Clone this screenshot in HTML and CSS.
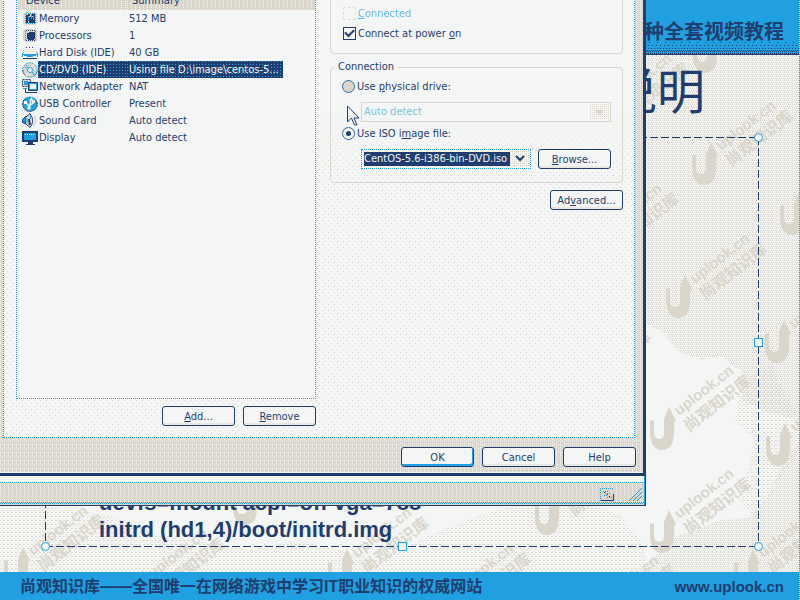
FILE: index.html
```html
<!DOCTYPE html>
<html lang="zh-CN">
<head>
<meta charset="utf-8">
<title>uplook.cn</title>
<link rel="stylesheet" href="styles.css">
</head>
<body>
<div class="slide">
  <svg class="backdrop" aria-hidden="true">
    <defs>
      <pattern id="dither" width="4" height="4" patternUnits="userSpaceOnUse">
        <path class="dot" d="M0 0h1v1h-1zM2 0h1v1h-1zM1 2h1v1h-1zM3 2h1v1h-1zM0 3h1v1h-1z"/>
      </pattern>
      <pattern id="sparse" width="4" height="4" patternUnits="userSpaceOnUse">
        <path class="dot" d="M0 0h1v1h-1zM2 2h1v1h-1zM3 0h1v1h-1z"/>
      </pattern>
      <g id="mark">
        <path d="M0 14L4 13V25Q4 32 9 32Q15 32 14 23V12L19 0L26 14L24 16Q25 35 20 40Q14 45 7 42Q0 38 0 25Z"/>
        <g transform="translate(29 9) rotate(-38)">
          <text class="mark-latin" x="0" y="0">uplook.cn</text>
          <text class="mark-cjk" x="-2" y="19">尚观知识库</text>
        </g>
      </g>
    </defs>
    <path fill="url(#dither)" d="M640 50H800V572H640L672 538L720 520L748 518L765 500L780 470L800 440V420L768 412L742 400V372L720 356L700 360L680 352L660 330L640 324Z"/>
    <path fill="url(#sparse)" d="M742 380L770 365L800 420V450L770 490L755 520L740 500L755 440L735 420ZM0 506H40L110 515L160 535L250 550L300 540L380 560L430 535L480 515L560 495L620 515L640 540L650 572H0Z"/>
    <g class="marks">
      <use href="#mark" x="693" y="30"/><use href="#mark" x="588" y="95"/>
      <use href="#mark" x="692" y="142"/><use href="#mark" x="780" y="192"/>
      <use href="#mark" x="578" y="225"/><use href="#mark" x="666" y="275"/>
      <use href="#mark" x="765" y="320"/><use href="#mark" x="550" y="362"/>
      <use href="#mark" x="650" y="407"/><use href="#mark" x="766" y="423"/>
      <use href="#mark" x="650" y="510"/><use href="#mark" x="535" y="492"/>
      <use href="#mark" x="734" y="549"/><use href="#mark" x="233" y="482"/>
      <use href="#mark" x="328" y="549"/><use href="#mark" x="4" y="547"/>
      <use href="#mark" x="124" y="570"/><use href="#mark" x="430" y="585"/>
      <use href="#mark" x="575" y="597"/>
    </g>
  </svg>
  <header class="banner">种全套视频教程</header>
  <main class="content">
    <h1 class="title">说明</h1>
    <div class="placeholder">
      <p class="code">devfs=mount acpi=off vga=788<br>initrd (hd1,4)/boot/initrd.img</p>
      <i class="handle round at-tr"></i><i class="handle at-r"></i>
      <i class="handle round at-br"></i><i class="handle at-b"></i>
      <i class="handle round at-bl"></i>
    </div>
  </main>
  <footer class="footer"><span>尚观知识库——全国唯一在网络游戏中学习IT职业知识的权威网站</span><a class="site" href="#">www.uplook.cn</a></footer>
</div>

<div class="vm-window">
  <div class="vm-edge"></div>
  <div class="statusbar">
    <svg class="status-icon" width="14" height="13" viewBox="0 0 14 13" shape-rendering="crispEdges"><path fill="#dad6cc" d="M0 0h14v13H0z"/><path fill="none" stroke="#20a0e0" stroke-dasharray="1 1" d="M0 .5h14M.5 0v13M3 3.500h6M5 5.500h5M4 7.500h4M7 9.500h5"/><path fill="#1f3d6f" d="M1 12h13v1H1zM13 6h1v7h-1zM4 4h1v1H4zM7 6h1v1H7zM9 8h1v1H9z"/></svg>
    <svg class="grip" width="14" height="14" viewBox="0 0 14 14" shape-rendering="crispEdges"><path stroke="#20a0e0" fill="none" d="M1 14L14 1M5 14L14 5M9 14L14 9"/></svg>
  </div>
</div>

<form class="dialog">
  <div class="page">
    <div class="devices">
      <div class="list">
        <table>
          <colgroup><col class="c-icon"><col class="c-name"><col class="c-sum"><col></colgroup>
          <thead><tr><th colspan="2">Device</th><th colspan="2" class="summary">Summary</th></tr></thead>
          <tbody>
            <tr><td><svg class="ic" viewBox="0 0 16 16"><rect x="1" y="1" width="14" height="13" rx="3" fill="#dad6cc"/><path fill="none" stroke="#20a0e0" stroke-dasharray="1 1" d="M4 2.500h9M4 12.500h9M3.500 3v9M13.500 3v9"/><path fill="#1f3d6f" d="M4 4h2v8H4zM7 6h5v6H7zM6 3h2v2H6zM10 3h3v2h-3zM12 5h1v7h-1z"/><path stroke="#20a0e0" d="M6.500 5v5M9.500 3v5M11.500 5v4"/></svg></td><td>Memory</td><td>512 MB</td><td></td></tr>
            <tr><td><svg class="ic" viewBox="0 0 16 16"><rect x="1" y="1" width="14" height="13" rx="3" fill="#dad6cc"/><path fill="none" stroke="#1f3d6f" stroke-dasharray="1 1" d="M4 2.500h9M4 12.500h9"/><path fill="none" stroke="#20a0e0" stroke-dasharray="1 1" d="M3.500 3v9M13.500 3v9"/><path fill="#1f3d6f" d="M5 5h2V4h6v7h-1v1H6v-1H5z"/></svg></td><td>Processors</td><td>1</td><td></td></tr>
            <tr><td><svg class="ic" viewBox="0 0 16 16"><path fill="#f4f6f5" d="M3 3h10l3 6v4H0V9z"/><path stroke="#1f3d6f" stroke-dasharray="1 2" d="M4 2.500h9"/><path stroke="#dad6cc" stroke-dasharray="1 1" d="M3 4.500h11M2 6.500h13"/><path fill="#20a0e0" d="M0 8h1v4H0zM15 8h1v4h-1zM1 9h14v1h-1v1h-3v1H5v-1H2v-1H1z"/><path stroke="#20a0e0" stroke-dasharray="1 1" d="M1 7.500h1M14 7.500h1"/><path stroke="#1f3d6f" d="M1 13.500h14"/></svg></td><td>Hard Disk (IDE)</td><td>40 GB</td><td></td></tr>
            <tr class="selected"><td><svg class="ic" viewBox="0 0 16 16"><circle cx="8" cy="8" r="7.300" fill="#dad6cc" stroke="#20a0e0" stroke-dasharray="2 1"/><path stroke="#1f3d6f" stroke-dasharray="1 1" fill="none" d="M3 13a6 6 0 0 1-2-5M12 14a7 7 0 0 0 3-5"/><path stroke="#20a0e0" stroke-dasharray="2 1" d="M4 3l3 4M9 9l3 4M3 5l3 3M10 10l3 2"/><path stroke="#f4f6f5" d="M9 6l3-4M7 10l-3 4"/><circle cx="8" cy="8" r="2.500" fill="#f4f6f5" stroke="#20a0e0"/></svg></td><td>CD/DVD (IDE)</td><td>Using file D:\image\centos-5...</td><td></td></tr>
            <tr><td><svg class="ic" viewBox="0 0 16 16"><path fill="#dad6cc" stroke="#1f3d6f" stroke-dasharray="2 1" d="M.5.5h8v7h-8z"/><path fill="#20a0e0" d="M2 2h4v4H2z"/><path stroke="#1f3d6f" fill="none" d="M3.500 9v4.500h3"/><path stroke="#20a0e0" fill="none" d="M1 9.500h4"/><path fill="#20a0e0" stroke="#1f3d6f" d="M6.500 3.500h9v8h-9z"/><path fill="#f4f6f5" d="M8 5h6v5H8z"/><path stroke="#1f3d6f" d="M6 13.500h9"/></svg></td><td>Network Adapter</td><td>NAT</td><td></td></tr>
            <tr><td><svg class="ic" viewBox="0 0 16 16"><circle cx="8" cy="8" r="7.600" fill="#20a0e0"/><path fill="none" stroke="#1f3d6f" stroke-dasharray="2 1" d="M4 2a7.300 7.300 0 1 0 10 2"/><path stroke="#f4f6f5" stroke-width="1.500" fill="none" d="M7 12l2-8M7 10L4 7M7 10l4-3V5"/><path fill="#f4f6f5" d="M7 4l3-3 1 4zM2 5h3v3H2zM10 4h3v3h-3z"/><circle cx="7" cy="12" r="1.800" fill="#f4f6f5"/></svg></td><td>USB Controller</td><td>Present</td><td></td></tr>
            <tr><td><svg class="ic" viewBox="0 0 16 16"><path fill="#20a0e0" stroke="#1f3d6f" d="M.5 6.500L4 3v8L.5 9.500z"/><path fill="#dad6cc" d="M4 4L8 0v14l-4-3z"/><path fill="none" stroke="#1f3d6f" d="M4 4L8 .5Q11 4 10.500 9 10 12 8 14.500L4 11"/><path stroke="#20a0e0" fill="none" d="M5 5v5M8.500 3v3"/><path stroke="#1f3d6f" stroke-width="2" d="M7 6l1 6"/><path stroke="#dad6cc" stroke-width="2" fill="none" d="M12 3q4 4-1 10"/></svg></td><td>Sound Card</td><td>Auto detect</td><td></td></tr>
            <tr><td><svg class="ic" viewBox="0 0 16 16"><path fill="#1f3d6f" d="M0 1h16v11H0zM6 12h5v2H6zM4 14h9v1H4z"/><path fill="#20a0e0" d="M2 3h12v7H2z"/><path stroke="#f4f6f5" stroke-dasharray="1 1" d="M3 4.500h10"/></svg></td><td>Display</td><td>Auto detect</td><td></td></tr>
          </tbody>
        </table>
      </div>
      <div class="actions"><button type="button"><u>A</u>dd...</button><button type="button"><u>R</u>emove</button></div>
    </div>
    <div class="settings">
      <fieldset class="status">
        <label class="opt off"><input type="checkbox" disabled><span><u>C</u>onnected</span></label>
        <label class="opt"><input type="checkbox" checked><span>Connect at power <u>o</u>n</span></label>
      </fieldset>
      <fieldset class="connection">
        <legend>Connection</legend>
        <label class="opt"><input type="radio" name="source"><span>Use <u>p</u>hysical drive:</span></label>
        <div class="indent">
          <span class="combo wide"><select disabled aria-label="Physical drive"><option>Auto detect</option></select><svg class="arrow" width="19" height="16" viewBox="0 0 19 16"><path fill="#dad6cc" d="M5 6h9l-4.500 5z"/></svg></span>
        </div>
        <label class="opt"><input type="radio" name="source" checked><span>Use ISO i<u>m</u>age file:</span></label>
        <div class="indent">
          <span class="combo"><select class="iso" aria-label="ISO image file"><option>CentOS-5.6-i386-bin-DVD.iso</option></select><svg class="arrow live" width="19" height="16" viewBox="0 0 19 16"><path stroke="#1f3d6f" stroke-width="2" fill="none" d="M6 5l4 4 4-4"/></svg></span>
          <button type="button"><u>B</u>rowse...</button>
        </div>
      </fieldset>
      <div class="actions"><button type="button">Ad<u>v</u>anced...</button></div>
    </div>
  </div>
  <div class="buttons"><button type="button" class="default">OK</button><button type="button">Cancel</button><button type="button">Help</button></div>
</form>
<svg class="pointer" width="14" height="22" viewBox="0 0 14 22"><path fill="#f4f6f5" stroke="#1f3d6f" d="M.5 1v16l4-4 3 7h2.500l-3-7H12z"/></svg>
</body>
</html>
```
FILE: styles.css
```css
:root {
  --navy: #1f3d6f;
  --blue: #20a0e0;
  --sand: #dad6cc;
  --paper: #f4f6f5;
  --ui: "DejaVu Sans Condensed", "Open Sans", sans-serif;
}
* { box-sizing: border-box; }
body {
  margin: 0;
  height: 100vh;
  overflow: hidden;
  position: relative;
  background: var(--paper);
  color: var(--navy);
  font: 11px/17px var(--ui);
}

/* slide */
.slide { position: relative; min-height: 100vh; display: flex; flex-direction: column; }
.slide::after {
  content: "";
  position: absolute;
  inset: 0 0 0 auto;
  width: 1px;
  background: repeating-linear-gradient(var(--blue) 0 1px, var(--sand) 1px 2px);
}
.backdrop { position: absolute; inset: 0; width: 100%; height: 100%; }
.dot { fill: var(--sand); shape-rendering: crispEdges; }
.marks { fill: var(--sand); }
.mark-latin { font: bold 15px "Liberation Sans", sans-serif; }
.mark-cjk { font: bold 16px "Noto Sans CJK SC", sans-serif; }
.banner {
  position: relative;
  height: 55px;
  padding: 17px 16px 0;
  text-align: right;
  font: bold 20px/30px "Liberation Sans", "Noto Sans CJK SC", sans-serif;
  background:
    conic-gradient(at 1px 1px, transparent 75%, var(--navy) 0) 0 100% / 2px 2px repeat-x,
    conic-gradient(at 1px 1px, transparent 75%, var(--navy) 0) 0 51px / 2px 2px repeat-x,
    conic-gradient(at 1px 1px, transparent 75%, var(--navy) 0) 1px 50px / 2px 2px repeat-x,
    conic-gradient(at 1px 1px, transparent 75%, var(--navy) 0) 0 48px / 3px 2px repeat-x,
    conic-gradient(at 1px 1px, transparent 75%, var(--navy) 0) 0 45px / 4px 2px repeat-x,
    conic-gradient(at 1px 1px, transparent 75%, var(--navy) 0) 1px 42px / 8px 2px repeat-x,
    linear-gradient(var(--navy) 0 0) 0 100% / 100% 1px no-repeat,
    var(--blue);
}
.content { position: relative; flex: 1; display: flex; flex-direction: column; padding: 0 41px 25px 45px; }
.title {
  margin: 0;
  height: 82px;
  padding-right: 54px;
  text-align: right;
  font: 400 48px/66px "Noto Sans CJK SC", sans-serif;
}
.placeholder {
  position: relative;
  flex: 1;
  display: flex;
  align-items: flex-end;
  padding: 0 54px 4px;
  background:
    repeating-linear-gradient(90deg, var(--navy) 0 8px, transparent 8px 11px) 0 0 / 100% 1px no-repeat,
    repeating-linear-gradient(90deg, var(--navy) 0 8px, transparent 8px 11px) 0 100% / 100% 1px no-repeat,
    repeating-linear-gradient(var(--navy) 0 8px, transparent 8px 11px) 0 0 / 1px 100% no-repeat,
    repeating-linear-gradient(var(--navy) 0 8px, transparent 8px 11px) 100% 0 / 1px 100% no-repeat;
}
.code { margin: 0; font: bold 22px/27px "Liberation Sans", sans-serif; }
.handle { position: absolute; width: 9px; height: 9px; background: var(--paper); border: 1px solid var(--blue); }
.round { border-radius: 50%; }
.at-tr { top: -4px; right: -4px; }
.at-r { top: calc(50% - 4px); right: -4px; }
.at-br { bottom: -4px; right: -4px; }
.at-b { bottom: -4px; left: calc(50% - 4px); }
.at-bl { bottom: -4px; left: -4px; }
.footer {
  position: relative;
  display: flex;
  justify-content: space-between;
  height: 28px;
  padding: 0 16px 0 20px;
  font: bold 16px/30px "Liberation Sans", "Noto Sans CJK SC", sans-serif;
  background: var(--blue);
}
.site { color: inherit; text-decoration: none; font-size: 15px; }

/* window behind the dialog */
.vm-window {
  position: absolute;
  top: 476px;
  left: 0;
  width: 646px;
  background: var(--paper);
  border-right: 1px solid var(--navy);
  border-bottom: 1px solid var(--navy);
}
.vm-edge { height: 6px; border-right: 1px solid var(--blue); }
.statusbar {
  display: flex;
  justify-content: flex-end;
  align-items: center;
  gap: 14px;
  height: 23px;
  padding-right: 2px;
  border-top: 1px dotted var(--blue);
  border-right: 1px solid var(--blue);
  background:
    conic-gradient(at 1px 1px, transparent 75%, var(--blue) 0) 0 100% / 2px 2px repeat-x,
    conic-gradient(at 1px 1px, transparent 75%, var(--blue) 0) 1px 19px / 2px 2px repeat-x,
    conic-gradient(at 1px 1px, transparent 75%, var(--paper) 0) 0 0 / 4px 2px,
    var(--sand);
}

/* dialog */
.dialog {
  position: absolute;
  top: -21px;
  left: 0;
  width: 646px;
  padding: 0 8px 6px 3px;
  border: solid var(--navy);
  border-width: 0 3px 3px 0;
  background:
    conic-gradient(at 1px 1px, transparent 75%, var(--paper) 0) 0 0 / 4px 2px,
    conic-gradient(at 1px 1px, transparent 75%, var(--paper) 0) 2px 1px / 4px 4px,
    var(--sand);
  box-shadow: inset 0 -1px var(--paper);
}
.page {
  position: relative;
  display: flex;
  gap: 14px;
  padding: 10px 11px 11px 12px;
  border: 1px dotted var(--blue);
  background: var(--paper);
}
.page::before {
  content: "";
  position: absolute;
  inset: 0;
  background:
    conic-gradient(at 1px 1px, transparent 75%, var(--sand) 0) 0 0 / 6px 6px,
    conic-gradient(at 1px 1px, transparent 75%, var(--sand) 0) 3px 3px / 6px 6px;
  -webkit-mask: linear-gradient(transparent 130px, #000 190px);
  mask: linear-gradient(transparent 130px, #000 190px);
}
.devices { position: relative; width: 300px; }
.settings { position: relative; flex: 1; }
.list { height: 409px; border: 1px dotted var(--blue); background: var(--paper); }
table { width: 100%; border-collapse: collapse; table-layout: fixed; }
.c-icon { width: 21px; }
.c-name { width: 89px; }
.c-sum { width: 156px; }
th {
  height: 19px;
  padding: 0 0 1px 9px;
  text-align: left;
  font-weight: 400;
  background:
    conic-gradient(at 1px 1px, transparent 75%, var(--paper) 0) 0 0 / 4px 2px,
    var(--sand);
}
th.summary { padding-left: 5px; }
td { height: 17px; padding: 0 0 0 1px; line-height: 16px; white-space: nowrap; }
td:first-child { padding-left: 5px; }
td:nth-child(3) { padding-left: 2px; }
.ic { display: block; width: 16px; height: 16px; }
.selected td:nth-child(2), .selected td:nth-child(3) {
  color: var(--paper);
  background:
    conic-gradient(at 1px 1px, transparent 75%, var(--blue) 0) 0 0 / 3px 3px,
    var(--navy);
}
.actions { display: flex; justify-content: flex-end; gap: 8px; padding-top: 7px; }
button {
  width: 73px;
  height: 20px;
  padding: 0;
  border: 1px solid var(--navy);
  border-radius: 3px;
  background: var(--paper);
  color: inherit;
  font: 11px/17px var(--ui);
  box-shadow: inset 0 -2px #e9e7e1;
}
.default { box-shadow: inset -1px -2px var(--blue); }
fieldset { margin: 0; min-width: 0; border: 1px solid var(--sand); border-radius: 4px; }
.status { height: 64px; padding: 12px 12px 0; }
.connection { margin-top: 4px; height: 125px; padding: 0 11px; }
legend { padding: 0 4px; margin-left: -8px; line-height: 18px; }
.opt { display: flex; align-items: center; gap: 2px; height: 20px; }
.off { color: var(--blue); opacity: .7; }
input {
  appearance: none;
  margin: 0;
  width: 13px;
  height: 13px;
  border: 1px solid var(--navy);
  background: var(--paper);
  display: grid;
  place-items: center;
}
input:disabled { border: 1px dashed var(--sand); }
input[type="radio"] { border-radius: 50%; border-color: #28689d; background: var(--sand); }
input[type="radio"]:checked { background: var(--paper); }
input[type="radio"]:checked::after { content: ""; width: 5px; height: 5px; border-radius: 50%; background: var(--navy); }
input[type="checkbox"]:checked::after {
  content: "";
  width: 7px;
  height: 4px;
  border: solid var(--navy);
  border-width: 0 0 2px 2px;
  rotate: -45deg;
  translate: 0 -1px;
}
.indent { display: flex; gap: 7px; padding: 6px 0 1px 19px; }
.combo { position: relative; flex: 1; height: 20px; }
select {
  appearance: none;
  width: 100%;
  height: 20px;
  padding: 2px 20px 2px 2px;
  border: 1px dotted var(--blue);
  border-radius: 0;
  background: var(--paper);
  color: inherit;
  font: 11px/14px var(--ui);
}
select:disabled { border: 1px solid var(--sand); color: #7cc3e3; opacity: 1; }
.iso { color: var(--paper); background: var(--navy) content-box; }
.arrow {
  position: absolute;
  top: 2px;
  right: 2px;
  pointer-events: none;
  background: conic-gradient(at 1px 1px, transparent 75%, var(--sand) 0) 0 0 / 2px 2px;
}
.buttons { display: flex; justify-content: flex-end; gap: 8px; padding-top: 9px; margin-right: -1px; }
.pointer { position: absolute; left: 347px; top: 105px; }
```
